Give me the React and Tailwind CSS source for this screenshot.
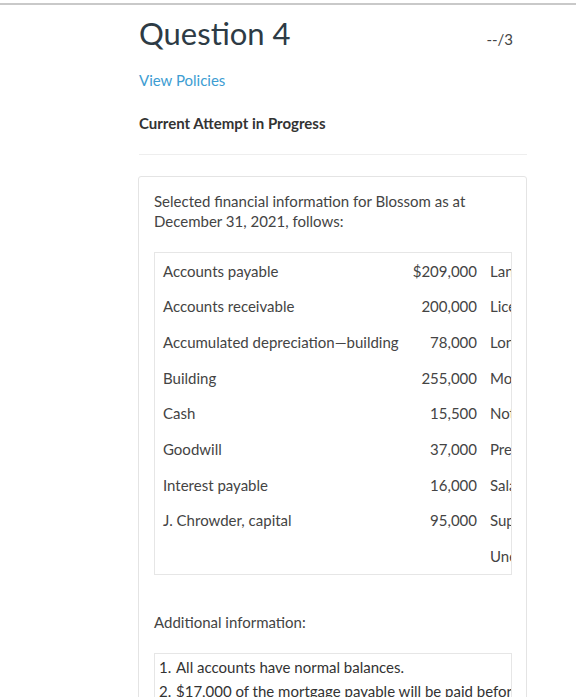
const rows = [
  ["Accounts payable", "$209,000", "Land"],
  ["Accounts receivable", "200,000", "Licences"],
  ["Accumulated depreciation\u2014building", "78,000", "Long-term investments"],
  ["Building", "255,000", "Mortgage payable"],
  ["Cash", "15,500", "Notes payable"],
  ["Goodwill", "37,000", "Prepaid insurance"],
  ["Interest payable", "16,000", "Salaries payable"],
  ["J. Chrowder, capital", "95,000", "Supplies"],
  ["", "", "Unearned revenue"],
];

export default function App() {
  return (
    <div className="min-h-[697px] bg-white font-['Lato','Open_Sans',sans-serif] text-[#333] overflow-hidden">
      <div className="h-[3px]" />
      <div className="h-[2px] bg-[#c9c9c9]" />

      <div className="ml-[139px] w-[388px]">
        <div className="flex items-start justify-between">
          <h1 className="text-[31px] leading-[38px] mt-[9px] text-[#2d3b45]">Question 4</h1>
          <span className="mt-[23px] mr-[14px] text-[15px] text-[#444]">--/3</span>
        </div>

        <a className="block mt-[18px] text-[15px] leading-5 text-[#3d9dd2]">View Policies</a>

        <p className="mt-[23px] text-[15px] leading-5 font-bold text-[#333]">Current Attempt in Progress</p>

        <div className="mt-[21px] h-[1px] bg-[#eeeeee]" />

        <div className="mt-[21px] ml-[-1px] border border-[#e4e4e4] rounded-[3px] px-[15px] pt-[14px] pb-10">
          <p className="text-[15px] leading-5 text-[#444]">
            Selected financial information for Blossom as at
            <br />
            December 31, 2021, follows:
          </p>

          <div className="mt-[21px] w-[358px] border border-[#e6e6e6] overflow-hidden">
            <div className="w-max">
              {rows.map(([label, amount, other], i) => (
                <div key={i} className="flex h-[35.7px] items-center text-[15px] whitespace-nowrap text-[#444]">
                  <div className="w-[255px] pl-2">{label}</div>
                  <div className="w-[67px] text-right">{amount}</div>
                  <div className="pl-[13px] w-[200px]">{other}</div>
                </div>
              ))}
            </div>
          </div>

          <p className="mt-[37px] text-[15px] leading-5 text-[#444]">Additional information:</p>

          <div className="mt-[21px] w-[358px] border border-[#e6e6e6] overflow-hidden pt-[1px] pl-[4px]">
            <ol className="w-max text-[15px] leading-6 text-[#333]">
              <li className="flex">
                <span className="w-[17px]">1.</span>
                <span>All accounts have normal balances.</span>
              </li>
              <li className="flex">
                <span className="w-[17px]">2.</span>
                <span>$17,000 of the mortgage payable will be paid before June 30, 2022.</span>
              </li>
              <li className="flex">
                <span className="w-[17px]">3.</span>
                <span>Long-term investments consist of shares that will be held for the long term.</span>
              </li>
            </ol>
          </div>
        </div>
      </div>
    </div>
  );
}
